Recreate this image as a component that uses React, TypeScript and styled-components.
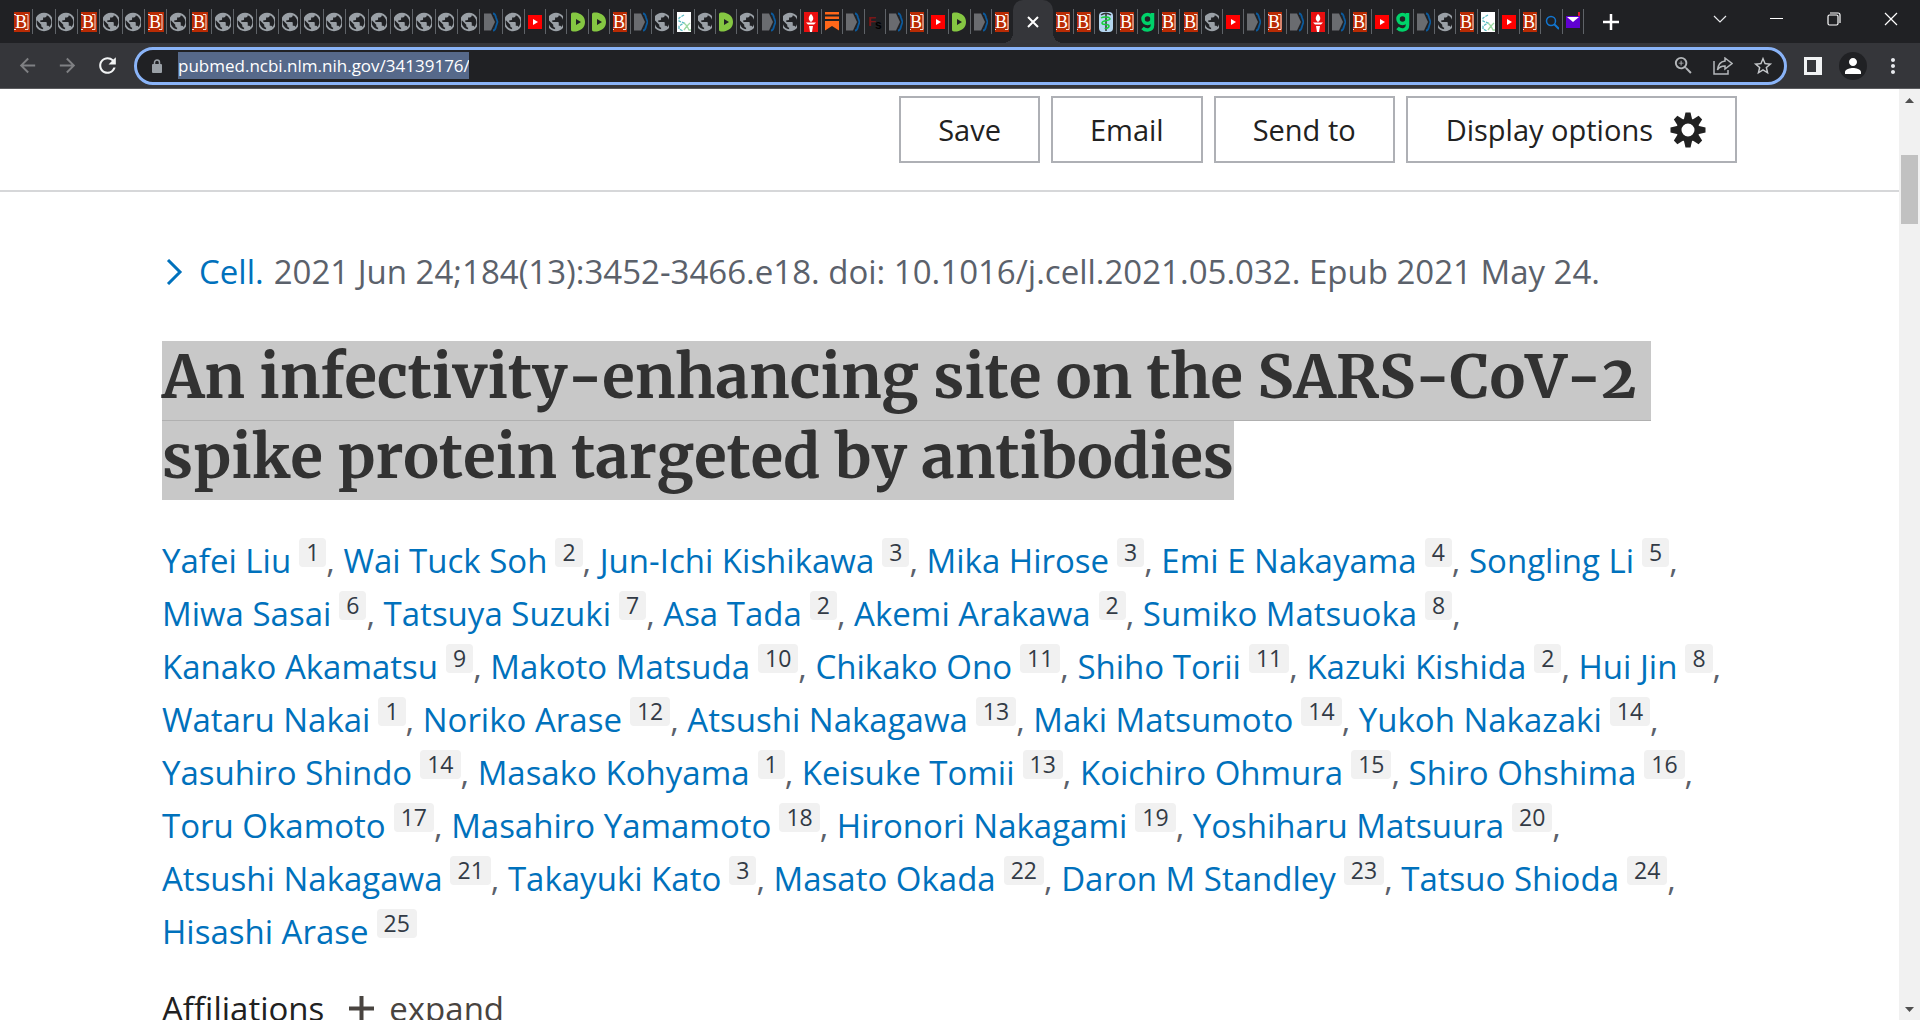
import React from "react";
import styled, { createGlobalStyle } from "styled-components";
import {
  MdArrowBack,
  MdArrowForward,
  MdRefresh,
  MdZoomIn,
  MdStarBorder,
  MdPerson,
  MdMoreVert,
  MdPublic,
} from "react-icons/md";

const SANS = `"Segoe UI", "Open Sans", "Noto Sans", sans-serif`;
const SERIF = `"Merriweather", "DejaVu Serif Condensed", "DejaVu Serif", serif`;

const GlobalStyle = createGlobalStyle`
  *, *::before, *::after { box-sizing: border-box; }
  body { margin: 0; background: #fff; font-family: ${SANS}; overflow: hidden; }
  button, input { font-family: inherit; }
  a { text-decoration: none; }
`;

const Browser = styled.div`
  display: flex;
  flex-direction: column;
  height: 100vh;
`;

/* ---------- tab strip ---------- */

const TabStrip = styled.nav`
  display: flex;
  flex: none;
  height: 43px;
  padding-left: 11px;
  background: #202124;
`;

const TabGroup = styled.div<{ $width: number }>`
  display: flex;
  flex: none;
  width: ${(p) => p.$width}px;
`;

const Tab = styled.button<{ $icon: number; $last?: boolean }>`
  display: flex;
  flex: 1 1 0;
  min-width: 0;
  align-items: center;
  justify-content: center;
  padding: 0 1px 0 0;
  border: 0;
  background: linear-gradient(#5f6368, #5f6368) no-repeat right 9px / ${(p) => (p.$last ? 0 : 1)}px 25px;
  & > span {
    display: flex;
    justify-content: center;
    width: ${(p) => p.$icon}px;
    overflow: hidden;
  }
  & svg {
    flex: none;
    display: block;
  }
`;

const ActiveTab = styled.div`
  position: relative;
  display: flex;
  flex: none;
  align-items: center;
  justify-content: center;
  width: 40px;
  border-radius: 10px 10px 0 0;
  background: #35363a;
  &::before,
  &::after {
    content: "";
    position: absolute;
    bottom: 0;
    width: 10px;
    height: 10px;
  }
  &::before {
    right: 100%;
    background: radial-gradient(circle at 0 0, transparent 10px, #35363a 10px);
  }
  &::after {
    left: 100%;
    background: radial-gradient(circle at 100% 0, transparent 10px, #35363a 10px);
  }
`;

const BareButton = styled.button<{ $width: number; $color?: string }>`
  display: flex;
  flex: none;
  align-items: center;
  justify-content: center;
  width: ${(p) => p.$width}px;
  padding: 0;
  border: 0;
  background: none;
  color: ${(p) => p.$color || "#fff"};
`;

const NewTab = styled(BareButton)`
  margin-left: 8px;
`;

const WindowControls = styled.div`
  display: flex;
  margin-left: auto;
  height: 38px;
`;

/* ---------- toolbar ---------- */

const Toolbar = styled.header`
  display: flex;
  flex: none;
  align-items: center;
  height: 46px;
  padding: 0 8px 0 7px;
  border-bottom: 1px solid #5b5c5f;
  background: #35363a;
`;

const AddressBar = styled.div`
  display: flex;
  flex: 1;
  align-items: center;
  height: 38px;
  margin: 0 7px;
  padding: 0 2px 0 14px;
  border: 3px solid #8ab4f8;
  border-radius: 19px;
  background: #202124;
  color: #9aa0a6;
`;

const Url = styled.input`
  width: 291px;
  height: 27px;
  margin-left: 15px;
  margin-right: auto;
  padding: 0;
  border: 0;
  outline: 0;
  background: #56698a;
  color: #fff;
  font-size: 17px;
`;

const Avatar = styled.span`
  display: flex;
  align-items: center;
  justify-content: center;
  width: 28px;
  height: 28px;
  border-radius: 50%;
  background: #202124;
`;

/* ---------- page ---------- */

const Viewport = styled.div`
  display: flex;
  flex: 1;
  min-height: 0;
`;

const Page = styled.main`
  flex: 1;
  min-width: 0;
  overflow: hidden;
`;

const Actions = styled.div`
  display: flex;
  justify-content: flex-end;
  gap: 11px;
  padding: 7px 162px 27px;
  border-bottom: 2px solid #d6d7d9;
`;

const ActionButton = styled.button`
  display: flex;
  align-items: center;
  gap: 17px;
  height: 67px;
  padding: 0 37px;
  border: 2px solid #aeb0b5;
  background: #fff;
  color: #212121;
  font-size: 29px;
  line-height: 40px;
  &:last-child {
    padding: 0 29px 0 38px;
  }
`;

const Article = styled.article`
  padding: 53px 162px 0;
`;

const Citation = styled.p`
  display: flex;
  align-items: center;
  gap: 10px;
  margin: 0 0 43px;
  color: #5b616b;
  font-size: 33px;
  line-height: 53px;
  white-space: nowrap;
`;

const CitationLink = styled.a`
  display: inline-flex;
  align-items: center;
  gap: 16px;
  padding-left: 3px;
  color: #0071bc;
`;

const Title = styled.h1`
  margin: 0;
  color: #323232;
  font-family: ${SERIF};
  font-size: 60px;
  font-weight: 700;
  font-kerning: none;
  font-variant-numeric: oldstyle-nums;
  line-height: 71px;
`;

const TitleLine = styled.span`
  display: block;
  width: fit-content;
  padding-bottom: 8px;
  background: #c8c8c8;
  white-space: pre;
  &:first-child {
    border-bottom: 1px solid #b0b0b0;
  }
`;

const Authors = styled.p`
  margin: 34px 0 0;
  color: #5b616b;
  font-size: 33px;
  line-height: 53px;
`;

const Author = styled.span`
  white-space: nowrap;
`;

const AuthorLink = styled.a`
  color: #0071bc;
`;

const Affiliation = styled.a`
  display: inline-block;
  margin-left: 8px;
  padding: 0 7px;
  border-radius: 4px;
  background: #f1f1f1;
  color: #323a45;
  font-size: 23px;
  line-height: 29px;
  vertical-align: 12px;
`;

const Affiliations = styled.div`
  display: flex;
  align-items: center;
  gap: 25px;
  margin-top: 24px;
  color: #212121;
  font-size: 33px;
  line-height: 53px;
`;

const Expand = styled.button`
  display: flex;
  align-items: center;
  gap: 15px;
  padding: 0;
  border: 0;
  background: none;
  color: #494440;
  font-size: 33px;
  line-height: 53px;
`;

const Scrollbar = styled.div`
  display: flex;
  flex: none;
  flex-direction: column;
  align-items: center;
  width: 21px;
  background: #f1f1f1;
`;

const ScrollThumb = styled.div`
  width: 17px;
  height: 69px;
  margin-top: 45px;
  margin-bottom: auto;
  background: #c1c1c1;
`;

const ScrollArrow = styled.svg`
  display: block;
  width: 21px;
  height: 21px;
  fill: #505050;
`;

/* ---------- favicons ---------- */

type IconName = "B" | "o" | "a" | "y" | "r" | "w" | "t" | "s" | "f" | "m" | "g" | "q" | "h";

const Svg = ({ children }: { children: React.ReactNode }) => (
  <svg width="20" height="20" viewBox="0 0 20 20" fill="none">
    {children}
  </svg>
);

const favicons: Record<IconName, React.ReactNode> = {
  B: (
    <Svg>
      <rect width="20" height="20" fill="#b92b04" />
      <path d="M0 2.500h4M0 17.500h4M13 2.500h3v15h-3" stroke="#f3ddd6" strokeWidth="1" />
      <text x="9" y="16" textAnchor="middle" fill="#fff" fontFamily="Liberation Serif, serif" fontSize="18">
        B
      </text>
    </Svg>
  ),
  o: <MdPublic size={22} color="#9aa0a6" />,
  a: (
    <Svg>
      <path d="M3 1.500h7l4 8.500-4 8.500H3z" fill="#6a6c70" />
      <path d="M12 1.500c2 0 2.500 1.500 3 4l1.500 4.500-1.500 4.500c-.5 2.500-1 4-3 4" stroke="#0b5a9d" strokeWidth="1.800" />
    </Svg>
  ),
  y: (
    <Svg>
      <rect x="0" y="3" width="20" height="14" rx="3" fill="#f00" />
      <path d="M8 7l5 3-5 3z" fill="#fff" />
    </Svg>
  ),
  r: (
    <Svg>
      <path
        fillRule="evenodd"
        d="M5 .5h3c5 1 9 4 9 9.500s-4 8.500-9 9.500H5c-1.500 0-2-1-2-2v-15c0-1 .5-2 2-2zM8 7v6l5-3z"
        fill="#85c742"
      />
    </Svg>
  ),
  w: (
    <Svg>
      <rect width="20" height="20" fill="#fff" />
      <path d="M10 3L5 6v3l5 2-5 3v3l4 2" stroke="#5bbcc4" strokeWidth="1.300" strokeDasharray="3 1" />
      <path d="M10 11l3 3-3 4M13 14l3-3M13 14l2 4 2 0" stroke="#9bd8a0" strokeWidth="1.300" />
    </Svg>
  ),
  t: (
    <Svg>
      <rect width="20" height="20" fill="#e80f0f" />
      <path d="M10 2c3 3 3 6 0 8-3-2-3-5 0-8zM5 10.500h10l-2 2H7zM8 14h4l-1 6H9z" fill="#fff" />
    </Svg>
  ),
  s: (
    <Svg>
      <path d="M2 0h16v2.500H2zM2 4.500h16V7H2zM2 9h16v10l-8-5-8 5z" fill="#ff6719" />
    </Svg>
  ),
  f: (
    <Svg>
      <text x="3" y="14" fill="#7a1717" fontFamily="Liberation Sans, sans-serif" fontWeight="700" fontSize="13">
        F
      </text>
      <text x="10" y="17" fill="#000" fontFamily="Liberation Sans, sans-serif" fontWeight="700" fontSize="12">
        s
      </text>
    </Svg>
  ),
  m: (
    <Svg>
      <rect x="3" width="14" height="20" rx="4" fill="#b4d6f0" />
      <path d="M5 3c3-2 7-2 10 0M10 2v17" stroke="#333" strokeWidth="1.500" />
      <path d="M5 6c3-2 9-1 9 1s-8 1-8 4 7 0 7 3-4 2-4 3" stroke="#17d03a" strokeWidth="1.500" />
    </Svg>
  ),
  g: (
    <Svg>
      <circle cx="9.500" cy="7" r="4.500" stroke="#00d26a" strokeWidth="3.500" />
      <path d="M14.500 1v12c0 6-7 6-10 3" stroke="#00d26a" strokeWidth="3.500" />
    </Svg>
  ),
  q: (
    <Svg>
      <circle cx="9" cy="9" r="4.500" stroke="#1275cf" strokeWidth="1.500" />
      <path d="M12 12l5 5" stroke="#1275cf" strokeWidth="2" />
    </Svg>
  ),
  h: (
    <Svg>
      <rect x="2" y="4" width="16" height="12" fill="#6001d2" />
      <path d="M4 5h12l-6 5z" fill="#fff" />
      <path d="M16 0v4" stroke="#e0162b" strokeWidth="2" />
    </Svg>
  ),
};

const labels: Record<IconName, string> = {
  B: "Bracket site",
  o: "Web page",
  a: "NCBI",
  y: "YouTube",
  r: "Rumble",
  w: "Chemistry",
  t: "Torch",
  s: "Substack",
  f: "FS",
  m: "Medicine",
  g: "Gab",
  q: "Search",
  h: "Mail",
};

const tabsStart = "BooBooBoBooooooooooooao";
const tabsMiddle = "yorrBaoworoaotsafaByraB";
const tabsEnd = "BBmBgBBoyaBataBygaoBwyBqh";

const Tabs = ({ names, icon, width, trimLast }: { names: string; icon: number; width: number; trimLast?: boolean }) => (
  <TabGroup $width={width}>
    {[...names].map((n, i) => (
      <Tab key={i} $icon={icon} $last={trimLast && i === names.length - 1} aria-label={labels[n as IconName]}>
        <span>{favicons[n as IconName]}</span>
      </Tab>
    ))}
  </TabGroup>
);

/* ---------- data ---------- */

const authors: [string, number][] = [
  ["Yafei Liu", 1],
  ["Wai Tuck Soh", 2],
  ["Jun-Ichi Kishikawa", 3],
  ["Mika Hirose", 3],
  ["Emi E Nakayama", 4],
  ["Songling Li", 5],
  ["Miwa Sasai", 6],
  ["Tatsuya Suzuki", 7],
  ["Asa Tada", 2],
  ["Akemi Arakawa", 2],
  ["Sumiko Matsuoka", 8],
  ["Kanako Akamatsu", 9],
  ["Makoto Matsuda", 10],
  ["Chikako Ono", 11],
  ["Shiho Torii", 11],
  ["Kazuki Kishida", 2],
  ["Hui Jin", 8],
  ["Wataru Nakai", 1],
  ["Noriko Arase", 12],
  ["Atsushi Nakagawa", 13],
  ["Maki Matsumoto", 14],
  ["Yukoh Nakazaki", 14],
  ["Yasuhiro Shindo", 14],
  ["Masako Kohyama", 1],
  ["Keisuke Tomii", 13],
  ["Koichiro Ohmura", 15],
  ["Shiro Ohshima", 16],
  ["Toru Okamoto", 17],
  ["Masahiro Yamamoto", 18],
  ["Hironori Nakagami", 19],
  ["Yoshiharu Matsuura", 20],
  ["Atsushi Nakagawa", 21],
  ["Takayuki Kato", 3],
  ["Masato Okada", 22],
  ["Daron M Standley", 23],
  ["Tatsuo Shioda", 24],
  ["Hisashi Arase", 25],
];

const Gear = () => (
  <svg width="36" height="36" viewBox="-18 -18 36 36" fill="#212121">
    {[0, 45, 90, 135, 180, 225, 270, 315].map((a) => (
      <path key={a} d="M-4.500 -9L-2.500 -17.500H2.500L4.500 -9z" transform={`rotate(${a})`} />
    ))}
    <circle r="9" fill="none" stroke="#212121" strokeWidth="5" />
  </svg>
);

export default function App() {
  return (
    <Browser>
      <GlobalStyle />
      <TabStrip aria-label="Open tabs">
        <Tabs names={tabsStart} icon={16} width={514} />
        <Tabs names={tabsMiddle} icon={14} width={488} trimLast />
        <ActiveTab>
          <BareButton $width={20} aria-label="Close tab">
            <svg width="12" height="12" viewBox="0 0 12 12" stroke="#fff" strokeWidth="2">
              <path d="M1 1l10 10M11 1L1 11" />
            </svg>
          </BareButton>
        </ActiveTab>
        <Tabs names={tabsEnd} icon={14} width={531} />
        <NewTab $width={38} aria-label="New tab">
          <svg width="16" height="16" viewBox="0 0 16 16" stroke="#fff" strokeWidth="2.500">
            <path d="M8 0v16M0 8h16" />
          </svg>
        </NewTab>
        <WindowControls>
          <BareButton $width={57} aria-label="Search tabs">
            <svg width="14" height="8" viewBox="0 0 14 8" fill="none" stroke="#e8eaed" strokeWidth="1.200">
              <path d="M1 1l6 6 6-6" />
            </svg>
          </BareButton>
          <BareButton $width={57} aria-label="Minimize">
            <svg width="13" height="2" viewBox="0 0 13 2" fill="#fff">
              <rect width="13" height="1" />
            </svg>
          </BareButton>
          <BareButton $width={57} aria-label="Restore">
            <svg width="14" height="14" viewBox="0 0 14 14" fill="none" stroke="#fff" strokeWidth="1.200">
              <rect x="1" y="3" width="10" height="10" rx="1.500" />
              <path d="M3 1h8q2 0 2 2v8" />
            </svg>
          </BareButton>
          <BareButton $width={58} aria-label="Close window">
            <svg width="14" height="14" viewBox="0 0 14 14" stroke="#fff" strokeWidth="1.200">
              <path d="M1 1l12 12M13 1L1 13" />
            </svg>
          </BareButton>
        </WindowControls>
      </TabStrip>

      <Toolbar>
        <BareButton $width={40} $color="#7f8083" aria-label="Back">
          <MdArrowBack size={23} />
        </BareButton>
        <BareButton $width={40} $color="#7f8083" aria-label="Forward">
          <MdArrowForward size={23} />
        </BareButton>
        <BareButton $width={40} $color="#f1f3f4" aria-label="Reload">
          <MdRefresh size={25} />
        </BareButton>
        <AddressBar>
          <svg width="12" height="14" viewBox="0 0 12 14">
            <rect x="1" y="5" width="10" height="9" rx="1" fill="#9aa0a6" />
            <path d="M3.500 6V3.500a2.500 2.500 0 015 0V6" fill="none" stroke="#9aa0a6" strokeWidth="1.500" />
          </svg>
          <Url aria-label="Address" defaultValue="pubmed.ncbi.nlm.nih.gov/34139176/" />
          <BareButton $width={40} $color="#b4b7ba" aria-label="Zoom">
            <MdZoomIn size={23} />
          </BareButton>
          <BareButton $width={40} $color="#b4b7ba" aria-label="Share">
            <svg width="20" height="18" viewBox="0 0 20 18" fill="none" stroke="currentColor" strokeWidth="1.500">
              <path d="M1 4v13h14v-4" />
              <path d="M12 1l7 5.500-7 5.500V9C8 9 6 10 4.500 13 5 8 8 4.500 12 4z" />
            </svg>
          </BareButton>
          <BareButton $width={39} $color="#c4c7ca" aria-label="Bookmark">
            <MdStarBorder size={22} />
          </BareButton>
        </AddressBar>
        <BareButton $width={38} aria-label="Side panel">
          <svg width="18" height="18" viewBox="0 0 18 18">
            <path fillRule="evenodd" fill="#f1f3f4" d="M0 0h18v18H0zM3 3v12h9V3z" />
          </svg>
        </BareButton>
        <BareButton $width={42} aria-label="Profile">
          <Avatar>
            <MdPerson size={24} />
          </Avatar>
        </BareButton>
        <BareButton $width={38} $color="#e8eaed" aria-label="Menu">
          <MdMoreVert size={24} />
        </BareButton>
      </Toolbar>

      <Viewport>
        <Page>
          <Actions>
            <ActionButton>Save</ActionButton>
            <ActionButton>Email</ActionButton>
            <ActionButton>Send to</ActionButton>
            <ActionButton>
              Display options
              <Gear />
            </ActionButton>
          </Actions>
          <Article>
            <Citation>
              <CitationLink href="#cell">
                <svg width="18" height="26" viewBox="0 0 18 26" fill="none" stroke="#0071bc" strokeWidth="3">
                  <path d="M3 1l12 12L3 25" />
                </svg>
                Cell.
              </CitationLink>
              <span>2021 Jun 24;184(13):3452-3466.e18. doi: 10.1016/j.cell.2021.05.032. Epub 2021 May 24.</span>
            </Citation>
            <Title>
              <TitleLine>{"An infectivity-enhancing site on the SARS-CoV-2 "}</TitleLine>
              <TitleLine>spike protein targeted by antibodies</TitleLine>
            </Title>
            <Authors>
              {authors.map(([name, n], i) => (
                <React.Fragment key={i}>
                  <Author>
                    <AuthorLink href="#author">{name}</AuthorLink>
                    <Affiliation href="#affiliation">{n}</Affiliation>
                    {i < authors.length - 1 ? "," : ""}
                  </Author>{" "}
                </React.Fragment>
              ))}
            </Authors>
            <Affiliations>
              <span>Affiliations</span>
              <Expand>
                <svg width="25" height="25" viewBox="0 0 25 25" stroke="#494440" strokeWidth="4">
                  <path d="M12.500 0v25M0 12.500h25" />
                </svg>
                expand
              </Expand>
            </Affiliations>
          </Article>
        </Page>
        <Scrollbar>
          <ScrollArrow viewBox="0 0 21 21">
            <path d="M6 14l4.500-5 4.500 5z" />
          </ScrollArrow>
          <ScrollThumb />
          <ScrollArrow viewBox="0 0 21 21">
            <path d="M6 8l4.500 5 4.500-5z" />
          </ScrollArrow>
        </Scrollbar>
      </Viewport>
    </Browser>
  );
}
